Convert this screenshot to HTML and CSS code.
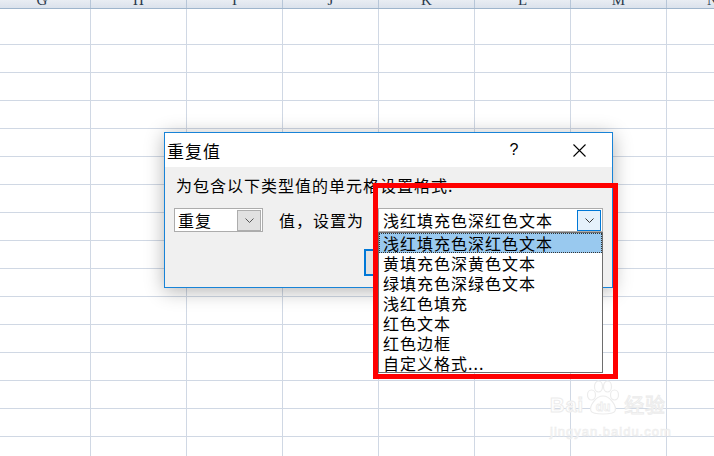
FILE: index.html
```html
<!DOCTYPE html>
<html lang="zh-CN">

<head>
    <meta charset="UTF-8">
    <title>重复值</title>
    <link rel="stylesheet" href="styles.css">
</head>

<body>
    <!-- Column headers, only the bottom edge is on screen -->
    <div class="sheet-head">
        <div class="col-head first"><span>G</span></div>
        <div class="col-head"><span>H</span></div>
        <div class="col-head"><span>I</span></div>
        <div class="col-head"><span>J</span></div>
        <div class="col-head"><span>K</span></div>
        <div class="col-head"><span>L</span></div>
        <div class="col-head"><span>M</span></div>
        <div class="col-head last"><span>N</span></div>
    </div>

    <div class="sheet">
        <div class="rows"></div>
    </div>

    <!-- Dialog window -->
    <div class="dialog">
        <div class="titlebar">
            <span class="title">重复值</span>
            <span class="help">?</span>
            <span class="close">
                <svg width="13" height="13" viewBox="0 0 13 13">
                    <path d="M0.5 0.5 L12.5 12.5 M12.5 0.5 L0.5 12.5" stroke="#000" stroke-width="1.1" fill="none"/>
                </svg>
            </span>
        </div>
        <div class="dialog-body">
            <p class="prompt">为包含以下类型值的单元格设置格式.</p>
            <div class="form-row">
                <div class="combo small">
                    <span class="combo-text">重复</span>
                    <span class="combo-btn">
                        <svg width="9" height="5" viewBox="0 0 9 5">
                            <polyline points="0.5,0.5 4.5,4.5 8.5,0.5" stroke="#555" fill="none"/>
                        </svg>
                    </span>
                </div>
                <span class="label">值，设置为</span>
                <div class="combo wide">
                    <span class="combo-text">浅红填充色深红色文本</span>
                    <span class="combo-btn active">
                        <svg width="9" height="5" viewBox="0 0 9 5">
                            <polyline points="0.5,0.5 4.5,4.5 8.5,0.5" stroke="#333" fill="none"/>
                        </svg>
                    </span>
                    <ul class="listbox">
                        <li class="selected">浅红填充色深红色文本</li>
                        <li>黄填充色深黄色文本</li>
                        <li>绿填充色深绿色文本</li>
                        <li>浅红色填充</li>
                        <li>红色文本</li>
                        <li>红色边框</li>
                        <li>自定义格式...</li>
                    </ul>
                </div>
            </div>
            <!-- OK / Cancel sit under the open list, only an edge shows -->
            <div class="buttons">
                <button class="btn default" aria-label="确定"></button>
                <button class="btn" aria-label="取消"></button>
            </div>
        </div>
    </div>

    <!-- Red annotation frame -->
    <div class="mark"></div>

    <!-- Watermark -->
    <div class="watermark">
        <div class="wm-logo">
            <span class="wm-bai">Bai</span>
            <svg class="wm-paw" width="34" height="36" viewBox="0 0 34 36">
                <ellipse cx="5.5" cy="15" rx="4" ry="5"/>
                <ellipse cx="12.5" cy="6.5" rx="4" ry="5.5"/>
                <ellipse cx="21.5" cy="6.5" rx="4" ry="5.5"/>
                <ellipse cx="28.5" cy="15" rx="4" ry="5"/>
                <path d="M17 16 C10 16 3 26 5 31 C7 35 27 35 29 31 C31 26 24 16 17 16 Z"/>
                <text x="17" y="31" text-anchor="middle">du</text>
            </svg>
            <span class="wm-cn">经验</span>
        </div>
        <div class="wm-url">jingyan.baidu.com</div>
    </div>
</body>

</html>
```

FILE: styles.css
```css
/* Basic reset */

* {
    margin: 0;
    padding: 0;
    box-sizing: border-box;
}

body {
    font-family: "Noto Sans CJK SC", "Noto Sans", sans-serif;
    font-size: 16px;
    color: #000;
    background: #fff;
    width: 714px;
    height: 456px;
    overflow: hidden;
}

/* Spreadsheet */

.sheet-head {
    display: flex;
    height: 9px;
    background: linear-gradient(#e9edf3, #dbe2ec);
    border-bottom: 1px solid #9fb5cc;
}

.col-head {
    width: 96px;
    flex: none;
    border-right: 1px solid #b7c6d8;
    overflow: hidden;
    text-align: center;
    font-family: "Liberation Serif", serif;
    font-size: 15px;
    line-height: 18px;
    color: #2b3a4c;
}

.col-head span {
    display: block;
    margin-top: -9px;
}

.col-head.first {
    width: 91px;
    text-indent: -6px;
}

.col-head.last {
    flex: 1;
    border-right: none;
    text-indent: 40px;
}

.sheet {
    height: 447px;
    background-image: linear-gradient(to right, transparent 95px, #d0d8e4 95px);
    background-size: 96px 100%;
    background-position: -5px 0;
    padding-top: 35px;
}

.rows {
    height: 100%;
    background-image: linear-gradient(to bottom, #d0d8e4 1px, transparent 1px),
        linear-gradient(to right, transparent 95px, #d0d8e4 95px);
    background-size: 96px 28px;
    background-position: -5px 0;
}

/* Dialog */

.dialog {
    position: absolute;
    left: 164px;
    top: 132px;
    width: 449px;
    height: 156px;
    background: #f0f0f0;
    border: 1px solid #1883d7;
    box-shadow: 0 3px 18px rgba(0, 0, 0, 0.3);
}

.titlebar {
    display: flex;
    align-items: center;
    height: 34px;
    background: #fff;
    padding-left: 2px;
}

.title {
    font-size: 17px;
    letter-spacing: 1px;
}

.help {
    margin-left: auto;
    width: 30px;
    text-align: center;
    font-family: "Liberation Sans", sans-serif;
    font-size: 16px;
}

.close {
    width: 30px;
    margin-left: 35px;
    margin-right: 18px;
    display: flex;
    justify-content: center;
}

.dialog-body {
    padding: 8px 0 0 9px;
}

.prompt {
    line-height: 20px;
    padding-left: 2px;
    letter-spacing: 1px;
}

.form-row {
    display: flex;
    align-items: center;
    margin-top: 13px;
    height: 24px;
}

.combo {
    position: relative;
    display: flex;
    align-items: center;
    height: 24px;
    background: #fff;
    border: 1px solid #acacac;
    padding-left: 3px;
}

.combo.small {
    width: 89px;
}

.combo.wide {
    width: 225px;
    margin-left: 14px;
    padding-left: 4px;
}

.combo-text {
    letter-spacing: 1px;
    line-height: 20px;
}

.combo-btn {
    margin-left: auto;
    margin-right: 1px;
    width: 24px;
    height: 21px;
    display: flex;
    align-items: center;
    justify-content: center;
    background: #e1e1e1;
    border: 1px solid #adadad;
}

.combo-btn.active {
    background: #e5f1fb;
    border-color: #0078d7;
}

.label {
    margin-left: 16px;
    width: 85px;
    letter-spacing: 1px;
}

.listbox {
    list-style: none;
    position: absolute;
    left: -1px;
    top: calc(100% + 1px);
    width: 225px;
    height: 141px;
    background: #fff;
    border: 1px solid #6e6e6e;
    z-index: 2;
}

.listbox li {
    height: 20px;
    line-height: 20px;
    padding-left: 4px;
    letter-spacing: 1px;
    white-space: nowrap;
}

.listbox li.selected {
    background: #99c9ef;
    outline: 1px dotted #333;
    outline-offset: -1px;
}

.buttons {
    display: flex;
    gap: 8px;
    margin-top: 17px;
    padding-left: 190px;
}

.btn {
    width: 75px;
    height: 27px;
    background: #e1e1e1;
    border: 1px solid #adadad;
}

.btn.default {
    border: 2px solid #0078d7;
}

/* Red annotation */

.mark {
    position: absolute;
    left: 373px;
    top: 183px;
    width: 245px;
    height: 196px;
    border: 5px solid #ff0000;
    z-index: 5;
}

/* Watermark */

.watermark {
    position: absolute;
    left: 550px;
    top: 380px;
    color: #fff;
}

.wm-logo {
    display: flex;
    align-items: flex-end;
    height: 36px;
}

.wm-bai,
.wm-cn {
    font-family: "Liberation Sans", sans-serif;
    font-weight: bold;
    font-size: 20px;
    line-height: 20px;
    letter-spacing: 1px;
    -webkit-text-stroke: 1px #ececec;
    margin-bottom: 1px;
}

.wm-cn {
    font-family: "Noto Sans CJK SC", sans-serif;
    font-weight: normal;
    margin-left: 4px;
}

.wm-paw {
    margin-left: 2px;
}

.wm-paw ellipse,
.wm-paw path {
    fill: #fff;
    stroke: #ececec;
    stroke-width: 1.2;
}

.wm-paw text {
    font-family: "Liberation Sans", sans-serif;
    font-weight: bold;
    font-size: 12px;
    fill: #fff;
    stroke: #ececec;
    stroke-width: 0.8;
}

.wm-url {
    margin-top: 9px;
    font-family: "Liberation Sans", sans-serif;
    font-size: 13px;
    line-height: 13px;
    letter-spacing: 1px;
    color: #fafafa;
    -webkit-text-stroke: 0.6px #ececec;
}
```
